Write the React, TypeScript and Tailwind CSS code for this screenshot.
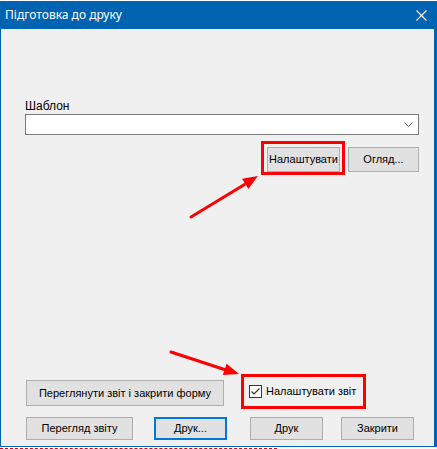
import React from "react";

const ui = { fontFamily: '"Liberation Sans", Arial, sans-serif' };

function Btn({ children, w, focused }: { children: React.ReactNode; w: string; focused?: boolean }) {
  return (
    <div
      className={
        "flex items-center justify-center bg-[#e1e1e1] text-[11px] text-black " +
        w +
        (focused ? " border-2 border-[#0078d7]" : " border border-[#adadad]")
      }
    >
      {children}
    </div>
  );
}

// arrow head polygon points for a line from (x1,y1) to (x2,y2)
function head(x1: number, y1: number, x2: number, y2: number, len = 15, half = 6) {
  const dx = x2 - x1;
  const dy = y2 - y1;
  const d = Math.hypot(dx, dy);
  const ux = dx / d;
  const uy = dy / d;
  const bx = x2 - ux * len;
  const by = y2 - uy * len;
  return `${x2},${y2} ${bx - uy * half},${by + ux * half} ${bx + uy * half},${by - ux * half}`;
}

function Arrows() {
  const a = [191, 217, 258, 176];
  const b = [171, 352, 239, 374];
  return (
    <svg className="absolute left-0 top-0 pointer-events-none" width="437" height="449">
      <line x1={a[0]} y1={a[1]} x2={(a[0] + a[2]) / 2 + 20} y2={(a[1] + a[3]) / 2 - 12} stroke="#ff0000" strokeWidth="3" strokeLinecap="round" />
      <polygon points={head(a[0], a[1], a[2], a[3])} fill="#ff0000" />
      <line x1={b[0]} y1={b[1]} x2={b[2] - 10} y2={b[3] - 3} stroke="#ff0000" strokeWidth="3" strokeLinecap="round" />
      <polygon points={head(b[0], b[1], b[2], b[3])} fill="#ff0000" />
    </svg>
  );
}

export default function App() {
  return (
    <div className="relative w-[437px] h-[449px] bg-white overflow-hidden" style={ui}>
      <div className="h-[1px] bg-white" />
      <div className="border-l border-r-[3px] border-b border-[#0063b1]">
        {/* title bar */}
        <div className="h-[28px] bg-[#0063b1] flex items-center justify-between pl-[4px] pr-[7px]">
          <span className="text-white text-[12px]" style={{ fontFamily: '"Noto Sans", "Open Sans", sans-serif' }}>
            Підготовка до друку
          </span>
          <svg width="11" height="11" viewBox="0 0 11 11">
            <path d="M0.5 0.5 L10.5 10.5 M10.5 0.5 L0.5 10.5" stroke="#fff" strokeWidth="1.1" />
          </svg>
        </div>

        {/* body */}
        <div className="h-[417px] bg-[#f0f0f0] pl-[24px] pr-[15px] pt-[70px] flex flex-col">
          <div className="h-[15px] text-[12px] leading-[15px] text-black">Шаблон</div>
          <div className="h-[21px] bg-white border border-[#7a7a7a] flex items-center justify-end pr-[5px]">
            <svg width="9" height="5" viewBox="0 0 9 5">
              <path d="M0.5 0.5 L4.5 4.5 L8.5 0.5" stroke="#555" strokeWidth="1" fill="none" />
            </svg>
          </div>

          <div className="mt-[6px] flex justify-end items-end">
            <div className="border-[3px] border-[#ff0000] pl-[3px] pt-[3px] pr-[2px]">
              <Btn w="w-[73px] h-[25px]">Налаштувати</Btn>
            </div>
            <div className="ml-[3px] mb-[3px]">
              <Btn w="w-[71px] h-[25px]">Огляд...</Btn>
            </div>
          </div>

          <div className="mt-[199px] flex items-start">
            <div className="ml-[1px] mt-[6px]">
              <Btn w="w-[198px] h-[26px]">Переглянути звіт і закрити форму</Btn>
            </div>
            <div className="ml-[17px] w-[125px] h-[35px] border-[3px] border-[#ff0000] flex items-center pl-[5px]">
              <div className="w-[13px] h-[13px] border border-[#333] bg-white flex items-center justify-center">
                <svg width="11" height="11" viewBox="0 0 11 11">
                  <path d="M1.5 5.5 L4 8 L9.5 2.5" stroke="#333" strokeWidth="1.2" fill="none" />
                </svg>
              </div>
              <span className="ml-[4px] text-[11px] text-black">Налаштувати звіт</span>
            </div>
          </div>

          <div className="mt-[8px] flex items-start">
            <div className="ml-[1px]">
              <Btn w="w-[107px] h-[23px]">Перегляд звіту</Btn>
            </div>
            <div className="ml-[21px]">
              <Btn w="w-[73px] h-[23px]" focused>
                Друк...
              </Btn>
            </div>
            <div className="ml-[23px]">
              <Btn w="w-[73px] h-[23px]">Друк</Btn>
            </div>
            <div className="ml-[18px]">
              <Btn w="w-[73px] h-[23px]">Закрити</Btn>
            </div>
          </div>
        </div>
      </div>
      <div className="mt-[1px] w-[277px] border-t border-dashed border-[#e00000]" />
      <Arrows />
    </div>
  );
}
